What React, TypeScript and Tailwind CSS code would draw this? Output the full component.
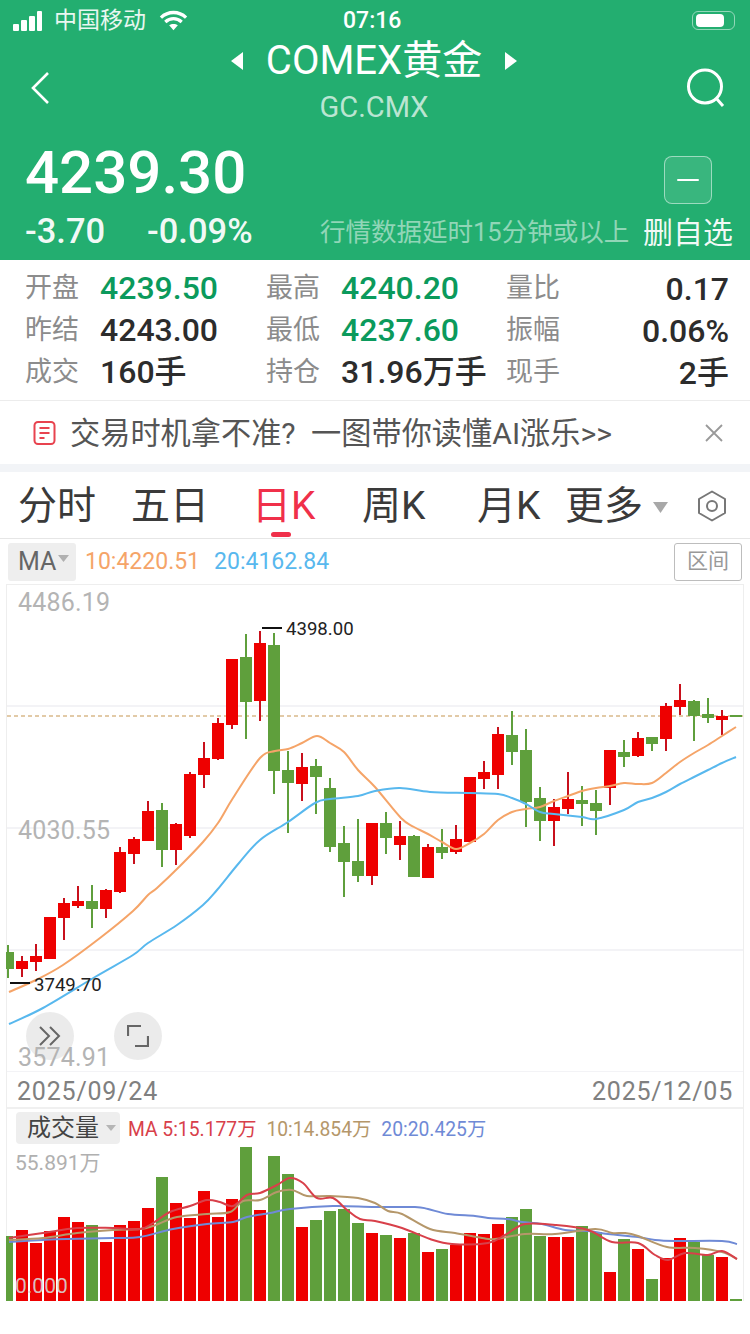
import React from "react";

type Candle = [number, string, number, number, number, number];

const RED = "#ee0000";
const GREEN = "#5f9f3c";

// x, colour, wick top, body top, body bottom, wick bottom
const candles: Candle[] = [
  [22, "r", 956, 961, 969, 977],
  [36, "r", 944, 956, 962, 971],
  [50, "r", 917, 917, 959, 959],
  [64, "r", 898, 903, 918, 940],
  [78, "r", 886, 901, 906, 908],
  [92, "g", 885, 901, 909, 928],
  [106, "r", 889, 890, 909, 918],
  [120, "r", 847, 852, 892, 893],
  [134, "r", 837, 839, 854, 864],
  [148, "r", 801, 811, 841, 841],
  [162, "g", 803, 810, 850, 867],
  [176, "r", 823, 824, 850, 865],
  [190, "r", 772, 774, 836, 838],
  [204, "r", 742, 758, 775, 788],
  [218, "r", 718, 723, 759, 760],
  [232, "r", 659, 659, 725, 729],
  [246, "g", 634, 657, 702, 739],
  [260, "r", 631, 643, 701, 721],
  [274, "g", 633, 645, 771, 794],
  [288, "g", 751, 770, 783, 833],
  [302, "r", 753, 767, 784, 801],
  [316, "g", 759, 766, 777, 814],
  [330, "g", 778, 788, 847, 852],
  [344, "g", 826, 843, 862, 897],
  [358, "g", 819, 861, 876, 882],
  [372, "r", 823, 823, 876, 885],
  [386, "g", 812, 823, 838, 854],
  [400, "r", 821, 836, 845, 860],
  [414, "g", 835, 836, 877, 877],
  [428, "r", 844, 847, 878, 878],
  [442, "g", 829, 847, 853, 859],
  [456, "r", 825, 839, 852, 854],
  [470, "r", 777, 777, 842, 842],
  [484, "r", 761, 772, 779, 789],
  [498, "r", 727, 734, 775, 789],
  [512, "g", 711, 735, 752, 765],
  [526, "g", 729, 750, 802, 827],
  [540, "g", 787, 798, 821, 841],
  [554, "r", 799, 807, 821, 846],
  [568, "r", 772, 799, 809, 814],
  [582, "g", 786, 800, 804, 826],
  [596, "g", 790, 803, 811, 835],
  [610, "r", 750, 750, 788, 805],
  [624, "g", 740, 752, 757, 767],
  [638, "r", 732, 738, 756, 757],
  [652, "g", 737, 737, 744, 751],
  [666, "r", 703, 706, 739, 751],
  [680, "r", 684, 700, 707, 715],
  [694, "g", 700, 701, 716, 741],
  [708, "g", 698, 714, 718, 723],
  [722, "r", 710, 716, 720, 735],
  [736, "g", 715, 715, 717, 717],
];

const ma10: number[][] = [
  [9, 992], [36, 980], [63, 965], [100, 938], [133, 911], [148, 895], [157, 888], [180, 866], [203, 842], [218, 823],
  [233, 798], [260, 758], [275, 751], [288, 749], [302, 743], [317, 736], [330, 743], [344, 752], [358, 770], [375, 787],
  [401, 818], [414, 827], [428, 834], [442, 842], [456, 849], [470, 843], [484, 834], [498, 820], [512, 812], [526, 809],
  [540, 807], [554, 801], [568, 796], [582, 791], [596, 788], [610, 786], [624, 783], [638, 784], [652, 783], [666, 773],
  [680, 762], [694, 753], [708, 745], [722, 736], [736, 727],
];

const ma20: number[][] = [
  [9, 1024], [43, 1008], [95, 977], [133, 955], [148, 943], [177, 925], [203, 905], [217, 890], [239, 863], [260, 840],
  [288, 822], [315, 803], [330, 799], [358, 796], [375, 791], [400, 788], [430, 792], [470, 793], [498, 794], [512, 798],
  [526, 804], [540, 812], [554, 814], [582, 817], [596, 819], [624, 810], [638, 802], [652, 798], [666, 792], [680, 784],
  [694, 777], [708, 770], [722, 763], [736, 757],
];

// x, colour, top of bar
const volumes: [number, string, number][] = [
  [22, "r", 1230], [36, "r", 1243], [50, "r", 1231], [64, "r", 1217], [78, "r", 1222], [92, "g", 1225], [106, "r", 1242],
  [120, "r", 1225], [134, "r", 1221], [148, "r", 1208], [162, "g", 1177], [176, "r", 1203], [190, "r", 1218], [204, "r", 1191],
  [218, "r", 1217], [232, "r", 1199], [246, "g", 1147], [260, "r", 1210], [274, "g", 1156], [288, "g", 1174], [302, "r", 1227],
  [316, "g", 1220], [330, "g", 1211], [344, "g", 1209], [358, "g", 1223], [372, "r", 1233], [386, "g", 1235], [400, "r", 1238],
  [414, "g", 1233], [428, "r", 1252], [442, "g", 1249], [456, "r", 1245], [470, "r", 1233], [484, "r", 1234], [498, "r", 1224],
  [512, "g", 1217], [526, "g", 1209], [540, "g", 1236], [554, "r", 1237], [568, "r", 1237], [582, "g", 1226], [596, "g", 1232],
  [610, "r", 1272], [624, "g", 1239], [638, "r", 1249], [652, "g", 1279], [666, "r", 1258], [680, "r", 1238], [694, "g", 1242],
  [708, "g", 1255], [722, "r", 1257], [736, "g", 1299],
];

const volMa5: number[][] = [
  [9, 1238], [43, 1233], [77, 1228], [113, 1228], [140, 1229], [153, 1223], [170, 1212], [190, 1206], [207, 1200], [220, 1202],
  [233, 1206], [247, 1195], [260, 1193], [277, 1185], [290, 1178], [303, 1183], [317, 1198], [333, 1198], [347, 1210], [360, 1219],
  [375, 1221], [402, 1228], [430, 1239], [452, 1244], [488, 1243], [505, 1235], [525, 1224], [555, 1225], [588, 1230], [612, 1242],
  [638, 1243], [655, 1255], [668, 1260], [685, 1253], [708, 1255], [722, 1251], [737, 1259],
];

const volMa10: number[][] = [
  [9, 1240], [43, 1238], [77, 1233], [113, 1230], [140, 1229], [153, 1226], [177, 1217], [207, 1214], [230, 1212], [243, 1201],
  [260, 1200], [277, 1192], [292, 1190], [307, 1196], [330, 1196], [358, 1198], [375, 1203], [388, 1211], [402, 1214], [430, 1229],
  [455, 1233], [482, 1238], [495, 1239], [525, 1234], [555, 1234], [595, 1229], [612, 1233], [625, 1233], [638, 1236], [667, 1247],
  [695, 1248], [722, 1252], [737, 1259],
];

const volMa20: number[][] = [
  [9, 1242], [43, 1240], [67, 1239], [113, 1238], [140, 1237], [173, 1229], [207, 1224], [233, 1222], [247, 1217], [270, 1213],
  [290, 1209], [333, 1206], [375, 1207], [415, 1207], [428, 1209], [448, 1214], [475, 1216], [488, 1218], [508, 1219], [522, 1222],
  [542, 1224], [565, 1230], [588, 1231], [608, 1234], [638, 1237], [655, 1240], [675, 1241], [722, 1241], [737, 1244],
];

// smooth line through the points
function linePath(pts: number[][]) {
  let d = `M${pts[0][0]} ${pts[0][1]}`;
  for (let i = 0; i < pts.length - 1; i++) {
    const p0 = pts[i - 1] || pts[i];
    const p1 = pts[i];
    const p2 = pts[i + 1];
    const p3 = pts[i + 2] || p2;
    const c1x = p1[0] + (p2[0] - p0[0]) / 6;
    const c1y = p1[1] + (p2[1] - p0[1]) / 6;
    const c2x = p2[0] - (p3[0] - p1[0]) / 6;
    const c2y = p2[1] - (p3[1] - p1[1]) / 6;
    d += ` C${c1x} ${c1y} ${c2x} ${c2y} ${p2[0]} ${p2[1]}`;
  }
  return d;
}

function StatusBar() {
  return (
    <div className="flex h-[40px] items-center pl-[13px] pr-[15px] text-white">
      <div className="flex items-end gap-[2px] pt-[1px]">
        <div className="h-[7px] w-[6px] rounded-[1px] bg-white" />
        <div className="h-[11px] w-[6px] rounded-[1px] bg-white" />
        <div className="h-[15px] w-[6px] rounded-[1px] bg-white" />
        <div className="h-[20px] w-[5px] rounded-[1px] bg-white" />
      </div>
      <span className="ml-[12px] text-[23px] leading-none text-white/90">中国移动</span>
      <svg className="ml-[13px]" width="29" height="22" viewBox="0 0 30 22" fill="none" stroke="#fff" strokeWidth="3.4">
        <path d="M2 8.5C9.5 1.5 20.5 1.5 28 8.5" />
        <path d="M6.5 13C11.5 8.5 18.5 8.5 23.5 13" />
        <path d="M15 21.5L10.5 16.5C13 14.6 17 14.6 19.5 16.5Z" fill="#fff" stroke="none" />
      </svg>
      <span className="ml-[155px] w-[64px] text-[23px] font-medium leading-none">07:16</span>
      <div className="ml-auto flex items-center">
        <div className="flex h-[19px] w-[43px] items-center rounded-[6px] border border-white/50 pl-[3px]">
          <div className="h-[13px] w-[28px] rounded-[4px] bg-white" />
        </div>
      </div>
    </div>
  );
}

function Header() {
  return (
    <div className="h-[260px] bg-[#23ae70] text-white">
      <StatusBar />
      <div className="flex h-[96px] items-center pl-[30px] pr-[24px]">
        <svg width="20" height="34" viewBox="0 0 20 34" fill="none" stroke="#fff" strokeWidth="2.6">
          <path d="M18 2L3 17L18 32" />
        </svg>
        <div className="mt-[-14px] flex flex-1 flex-col items-center pl-[12px]">
          <div className="flex h-[40px] items-center gap-[22px]">
            <svg width="13" height="18" viewBox="0 0 13 18" fill="#fff">
              <path d="M12 0V18L0 9Z" />
            </svg>
            <span className="text-[40px] leading-none">COMEX黄金</span>
            <svg width="13" height="18" viewBox="0 0 13 18" fill="#fff">
              <path d="M1 0V18L13 9Z" />
            </svg>
          </div>
          <span className="mt-[12px] text-[29px] leading-none text-white/70">GC.CMX</span>
        </div>
        <svg width="40" height="40" viewBox="0 0 40 40" fill="none" stroke="#fff" strokeWidth="3">
          <circle cx="19" cy="18.5" r="16.5" />
          <path d="M30 30L37 38" />
        </svg>
      </div>
      <div className="relative flex h-[124px] flex-col pl-[25px]">
        <span className="mt-[2px] h-[69px] text-[60px] font-medium leading-[69px]">4239.30</span>
        <div className="mt-[7px] flex items-baseline text-[34.5px] font-medium leading-none text-white/95">
          <span className="w-[122px]">-3.70</span>
          <span className="w-[173px]">-0.09%</span>
          <span className="w-[323px] -translate-y-[2px] text-[25.5px] font-normal text-white/50">行情数据延时15分钟或以上</span>
          <span className="text-[30px] font-normal">删自选</span>
        </div>
        <div className="absolute left-[664px] top-[20px] flex h-[48px] w-[48px] items-center justify-center rounded-[8px] border border-white/50 bg-white/10">
          <div className="h-[2.5px] w-[22px] rounded-full bg-white" />
        </div>
      </div>
    </div>
  );
}

function Stat({ label, value, color }: { label: string; value: string; color: string }) {
  return (
    <div className="flex items-center">
      <span className="w-[75px] text-[27px] leading-none text-[#8c8c8c]">{label}</span>
      <span className={`whitespace-nowrap text-[32px] font-medium leading-none ${color}`}>{value}</span>
    </div>
  );
}

function StatsGrid() {
  const dark = "text-[#2c2c2c]";
  const green = "text-[#0b9a5c]";
  return (
    <div className="grid h-[141px] grid-cols-[241px_240px_223px] content-start gap-y-0 border-b border-[#ececec] pl-[25px] pt-[7px] [grid-auto-rows:42px]">
      <Stat label="开盘" value="4239.50" color={green} />
      <Stat label="最高" value="4240.20" color={green} />
      <Stat label="量比" value="" color={dark} />
      <Stat label="昨结" value="4243.00" color={dark} />
      <Stat label="最低" value="4237.60" color={green} />
      <Stat label="振幅" value="" color={dark} />
      <Stat label="成交" value="160手" color={dark} />
      <Stat label="持仓" value="31.96万手" color={dark} />
      <Stat label="现手" value="" color={dark} />
    </div>
  );
}

function Banner() {
  return (
    <div className="flex h-[63px] items-center pl-[33px] pr-[27px]">
      <svg width="23" height="24" viewBox="0 0 23 24" fill="none" stroke="#e8434f" strokeWidth="2">
        <rect x="1.5" y="1" width="20" height="22" rx="3.5" />
        <path d="M6.5 7H16.5M6.5 12H16.5M6.5 17H11.5" />
      </svg>
      <span className="ml-[14px] mt-[3px] whitespace-nowrap text-[30.2px] leading-none text-[#555] [word-spacing:8px]">交易时机拿不准? 一图带你读懂AI涨乐&gt;&gt;</span>
      <svg className="ml-auto" width="18" height="18" viewBox="0 0 18 18" stroke="#999" strokeWidth="1.8">
        <path d="M1 1L17 17M17 1L1 17" />
      </svg>
    </div>
  );
}

function Tabs() {
  return (
    <div className="relative flex h-[67px] items-center border-b border-[#e6e6e6] pl-[18px] pt-[2px] text-[39px] leading-none text-[#3a3a3a]">
      <span className="w-[113px]">分时</span>
      <span className="w-[121px]">五日</span>
      <span className="relative w-[110px] text-[#f0304a]">
        日K
        <span className="absolute left-[19px] top-[45px] h-[5px] w-[20px] rounded-full bg-[#f0304a]" />
      </span>
      <span className="w-[115px]">周K</span>
      <span className="w-[88px]">月K</span>
      <span>更多</span>
      <svg className="ml-[10px] mt-[2px]" width="15" height="11" viewBox="0 0 15 11" fill="#a8a8a8">
        <path d="M0 0H15L7.5 11Z" />
      </svg>
      <svg className="ml-[29px]" width="30" height="32" viewBox="0 0 30 32" fill="none" stroke="#777" strokeWidth="2">
        <path d="M15 1.5L28 9V23L15 30.5L2 23V9Z" strokeLinejoin="round" />
        <circle cx="15" cy="16" r="5" />
      </svg>
    </div>
  );
}

function MaRow() {
  return (
    <div className="flex h-[45px] items-center pl-[8px] pr-[8px]">
      <div className="flex h-[38px] w-[68px] items-center rounded-[3px] bg-[#eeeeee] pl-[10px] text-[25px] leading-none text-[#666]">
        MA
        <svg className="ml-[2px] mb-[6px]" width="11" height="7" viewBox="0 0 11 7" fill="#b0b0b0">
          <path d="M0 0H11L5.5 7Z" />
        </svg>
      </div>
      <span className="ml-[9px] text-[23px] leading-none text-[#f5a468]">10:4220.51</span>
      <span className="ml-[14px] text-[23px] leading-none text-[#58b8ee]">20:4162.84</span>
      <div className="ml-auto flex h-[38px] w-[68px] items-center justify-center rounded-[3px] border border-[#bdbdbd] text-[21px] leading-none text-[#999]">
        区间
      </div>
    </div>
  );
}

function KlineChart() {
  return (
    <div className="relative h-[488px]">
      <svg className="block" width="750" height="488" viewBox="0 584 750 488">
        <rect x="6.5" y="584.5" width="737" height="488" fill="none" stroke="#eeeeee" />
        {[706, 828, 950, 1072].map((y) => (
          <path key={y} d={`M7 ${y}H743`} stroke="#f3f3f6" strokeWidth="2" />
        ))}
        <path d="M7 716H743" stroke="#d9b98a" strokeWidth="1.6" strokeDasharray="4 3" />
        <path d="M8 945V978" stroke={GREEN} strokeWidth="2" />
        <rect x="6" y="952" width="8" height="17" fill={GREEN} />
        {candles.map(([x, c, hi, top, bot, lo]) => {
          const col = c === "r" ? RED : GREEN;
          return (
            <g key={x}>
              <path d={`M${x} ${hi}V${lo}`} stroke={c === "r" ? "#c8101c" : GREEN} strokeWidth="2" />
              <rect x={x - 6} y={top} width="12" height={bot - top} fill={col} />
            </g>
          );
        })}
        <path d={linePath(ma10)} fill="none" stroke="#f5a468" strokeWidth="2" />
        <path d={linePath(ma20)} fill="none" stroke="#58b8ee" strokeWidth="2" />
        <path d="M262 628H282M10 983H30" stroke="#111" strokeWidth="2" />
      </svg>
      <span className="absolute left-[18px] top-[6px] text-[25px] leading-none tracking-[0.2px] text-[#b4b4b4]">4486.19</span>
      <span className="absolute left-[18px] top-[234px] text-[25px] leading-none tracking-[0.2px] text-[#b4b4b4]">4030.55</span>
      <span className="absolute left-[286px] top-[36px] text-[18.6px] leading-none text-[#222]">4398.00</span>
      <span className="absolute left-[34px] top-[392px] text-[18.6px] leading-none text-[#222]">3749.70</span>
      <div className="absolute left-[26px] top-[428px] flex h-[48px] w-[48px] items-center justify-center rounded-full bg-[#e9e9e9]/90">
        <svg width="24" height="20" viewBox="0 0 24 20" fill="none" stroke="#666" strokeWidth="2">
          <path d="M2 1L11 10L2 19M12 1L21 10L12 19" />
        </svg>
      </div>
      <div className="absolute left-[114px] top-[428px] flex h-[48px] w-[48px] items-center justify-center rounded-full bg-[#e9e9e9]/90">
        <svg width="22" height="22" viewBox="0 0 22 22" fill="none" stroke="#666" strokeWidth="2.2">
          <path d="M1 11V1H14M21 11V21H8" />
        </svg>
      </div>
      <span className="absolute left-[18px] top-[461px] text-[25px] leading-none tracking-[0.2px] text-[#b4b4b4]">3574.91</span>
    </div>
  );
}

function VolumeChart() {
  return (
    <div className="relative h-[195px]">
      <svg className="block" width="750" height="195" viewBox="0 1107 750 195">
        <path d="M6.5 1107V1301M743.5 1107V1301" stroke="#eeeeee" fill="none" />
        <path d="M7 1108H743" stroke="#f0f0f0" strokeWidth="2" />
        <rect x="6" y="1236" width="7" height="65" fill={GREEN} />
        {volumes.map(([x, c, top]) => (
          <rect key={x} x={x - 6} y={top} width="12" height={1301 - top} fill={c === "r" ? RED : GREEN} />
        ))}
        <path d={linePath(volMa20)} fill="none" stroke="#6f8ad6" strokeWidth="2" />
        <path d={linePath(volMa10)} fill="none" stroke="#b5976a" strokeWidth="2" />
        <path d={linePath(volMa5)} fill="none" stroke="#d8404a" strokeWidth="2" />
      </svg>
      <div className="absolute left-[16px] top-[5px] flex h-[32px] w-[104px] items-center rounded-[4px] bg-[#eeeeee] pl-[11px] text-[24px] leading-none text-[#444]">
        成交量
        <svg className="ml-[7px]" width="10" height="6" viewBox="0 0 10 6" fill="#b5b5b5">
          <path d="M0 0H10L5 6Z" />
        </svg>
      </div>
      <div className="absolute left-[128px] top-[13px] flex gap-[10px] text-[19.3px] leading-none">
        <span className="text-[#d8404a]">MA 5:15.177万</span>
        <span className="text-[#b5976a]">10:14.854万</span>
        <span className="text-[#6f8ad6]">20:20.425万</span>
      </div>
      <span className="absolute left-[15px] top-[46px] text-[21px] leading-none text-[#b0b0b0]">55.891万</span>
      <span className="absolute left-[15px] top-[169px] text-[21px] leading-none text-[#d8d8d8]/90">0.000</span>
    </div>
  );
}

export default function App() {
  return (
    <div className="relative h-[1334px] w-[750px] overflow-hidden bg-white font-['Roboto','Noto_Sans_CJK_SC',sans-serif]">
      <Header />
      <div className="relative">
        <StatsGrid />
        <span className="absolute right-[21px] top-[13px] text-[32px] font-medium leading-none text-[#2c2c2c]">0.17</span>
        <span className="absolute right-[21px] top-[55px] text-[32px] font-medium leading-none text-[#2c2c2c]">0.06%</span>
        <span className="absolute right-[21px] top-[97px] text-[32px] font-medium leading-none text-[#2c2c2c]">2手</span>
      </div>
      <Banner />
      <div className="h-[8px] bg-[#f2f4f7]" />
      <Tabs />
      <MaRow />
      <KlineChart />
      <div className="mx-[6px] flex h-[35px] items-center justify-between border-x border-[#eeeeee] px-[10px] pt-[3px] text-[25px] leading-none tracking-[0.8px] text-[#808080]">
        <span>2025/09/24</span>
        <span>2025/12/05</span>
      </div>
      <VolumeChart />
    </div>
  );
}
